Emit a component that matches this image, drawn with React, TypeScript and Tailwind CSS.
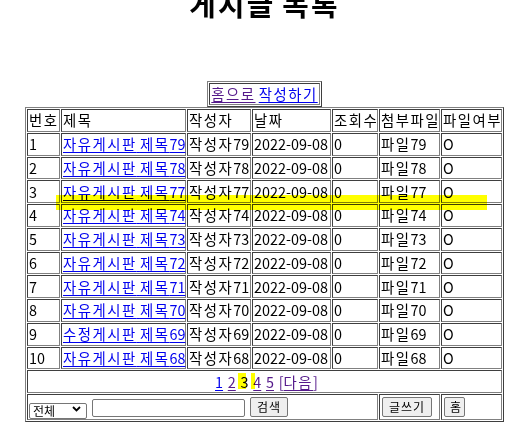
import React from "react";

// 게시글 목록 — border=1 테이블 화면 재현

interface Post {
  no: number;
  title: string;
  writer: string;
  file: string;
}

const POSTS: Post[] = [79, 78, 77, 74, 73, 72, 71, 70, 69, 68].map((n, i) => ({
  no: i + 1,
  title: `${n === 69 ? "수정게시판" : "자유게시판"} 제목${n}`,
  writer: `작성자${n}`,
  file: `파일${n}`,
}));

const HEADERS = ["번호", "제목", "작성자", "날짜", "조회수", "첨부파일", "파일여부"];
const COL_W = ["w-[33px]", "w-[125px]", "w-[64px]", "w-[79px]", "w-[46px]", "w-[61px]", "w-[61px]"];

const CELL =
  "h-[22.75px] border border-t-[#3f3f3f] border-l-[#3f3f3f] border-b-[#808080] border-r-[#808080] px-[1px] py-0 align-middle whitespace-nowrap leading-[18px]";

const TABLE =
  "border-separate border-spacing-[1px] border border-t-[#808080] border-l-[#808080] border-b-[#3f3f3f] border-r-[#3f3f3f]";

const LINK = "text-[#0000ee] underline underline-offset-[2px]";
const VISITED = "text-[#551a8b] underline underline-offset-[2px]";

const BUTTON =
  "h-[20px] rounded-[2px] border border-[#767676] bg-[#efefef] px-[5px] text-[12px] leading-[18px] text-black";

// 한글 글자 폭을 맑은 고딕에 가깝게 맞추려고 한글 구간만 자간을 넓힘
function Ko({ t, track = "tracking-[1.5px]" }: { t: string; track?: string }) {
  return (
    <>
      {t.split(/([가-힣]+)/).map((s, i) =>
        /[가-힣]/.test(s) ? (
          <span key={i} className={track}>
            {s}
          </span>
        ) : (
          s
        ),
      )}
    </>
  );
}

export default function App() {
  return (
    <div className="relative h-[446px] overflow-hidden bg-white pl-[4px] font-['Noto_Sans_CJK_KR',sans-serif] text-[14.4px] text-black">
      <h1 className="-mt-[11px] h-[29px] text-center text-[28.8px] font-bold leading-[29px]">
        <Ko t="게시글 목록" track="tracking-[2.3px]" />
      </h1>

      {/* ─── 홈으로 / 작성하기 ─────────────────────────────────────────── */}
      <table className={`mx-auto mt-[63px] ${TABLE}`}>
        <tbody>
          <tr>
            <td className={`${CELL} h-[22px]`}>
              <a className={VISITED}>
                <Ko t="홈으로" />
              </a>{" "}
              <a className={LINK}>
                <Ko t="작성하기" />
              </a>
            </td>
          </tr>
        </tbody>
      </table>

      {/* ─── 목록 ────────────────────────────────────────────────────── */}
      <table className={`mx-auto w-[479px] table-fixed ${TABLE}`}>
        <tbody>
          <tr>
            {HEADERS.map((h, i) => (
              <td key={h} className={`${CELL} ${COL_W[i]}`}>
                <Ko t={h} />
              </td>
            ))}
          </tr>
          {POSTS.map((p) => (
            <tr key={p.no}>
              <td className={CELL}>{p.no}</td>
              <td className={CELL}>
                <a className={LINK}>
                  <Ko t={p.title} />
                </a>
              </td>
              <td className={CELL}>
                <Ko t={p.writer} />
              </td>
              <td className={CELL}>2022-09-08</td>
              <td className={CELL}>0</td>
              <td className={CELL}>
                <Ko t={p.file} />
              </td>
              <td className={CELL}>O</td>
            </tr>
          ))}
          <tr>
            <td colSpan={7} className={`${CELL} pl-[5px] text-center [word-spacing:1.5px]`}>
              <a className={LINK}>1</a> <a className={VISITED}>2</a> <span>3</span>{" "}
              <a className={VISITED}>4</a> <a className={VISITED}>5</a>{" "}
              <span className="text-[#551a8b]">
                [
                <span className="underline underline-offset-[2px]">
                  <Ko t="다음" />
                </span>
                ]
              </span>
            </td>
          </tr>
          <tr>
            <td colSpan={5} className={`${CELL} h-[26px]`}>
              <div className="flex items-end gap-[5px]">
                <div className="relative h-[16px] w-[58px]">
                  <select className="h-full w-full appearance-none rounded-[2px] border border-[#767676] bg-white pl-[3px] text-[12px] leading-[14px]">
                    <option>전체</option>
                  </select>
                  <svg
                    className="pointer-events-none absolute right-[6px] top-[5px]"
                    width="9"
                    height="6"
                    viewBox="0 0 9 6"
                  >
                    <path d="M1 1l3.5 3.5L8 1" fill="none" stroke="#000" strokeWidth="1.8" />
                  </svg>
                </div>
                <input className="h-[18px] w-[153px] rounded-[2px] border border-[#767676] bg-white" />
                <button className={`${BUTTON} w-[38px]`}>
                  <Ko t="검색" track="tracking-[1px]" />
                </button>
              </div>
            </td>
            <td className={`${CELL} h-[26px] pl-[2px]`}>
              <button className={`${BUTTON} w-[50px]`}>
                <Ko t="글쓰기" track="tracking-[1px]" />
              </button>
            </td>
            <td className={`${CELL} h-[26px] pl-[2px]`}>
              <button className={`${BUTTON} w-[21px] px-0`}>홈</button>
            </td>
          </tr>
        </tbody>
      </table>

      {/* ─── 형광펜 표시 ─────────────────────────────────────────────── */}
      <div className="pointer-events-none absolute left-[56px] top-[195px] h-[15px] w-[431px] bg-[#ffff00] mix-blend-multiply" />
      <div className="pointer-events-none absolute left-[238px] top-[373px] h-[16px] w-[8px] bg-[#ffff00] mix-blend-multiply" />
      <div className="pointer-events-none absolute left-[251px] top-[373px] h-[16px] w-[4px] bg-[#ffff00] mix-blend-multiply" />
    </div>
  );
}
